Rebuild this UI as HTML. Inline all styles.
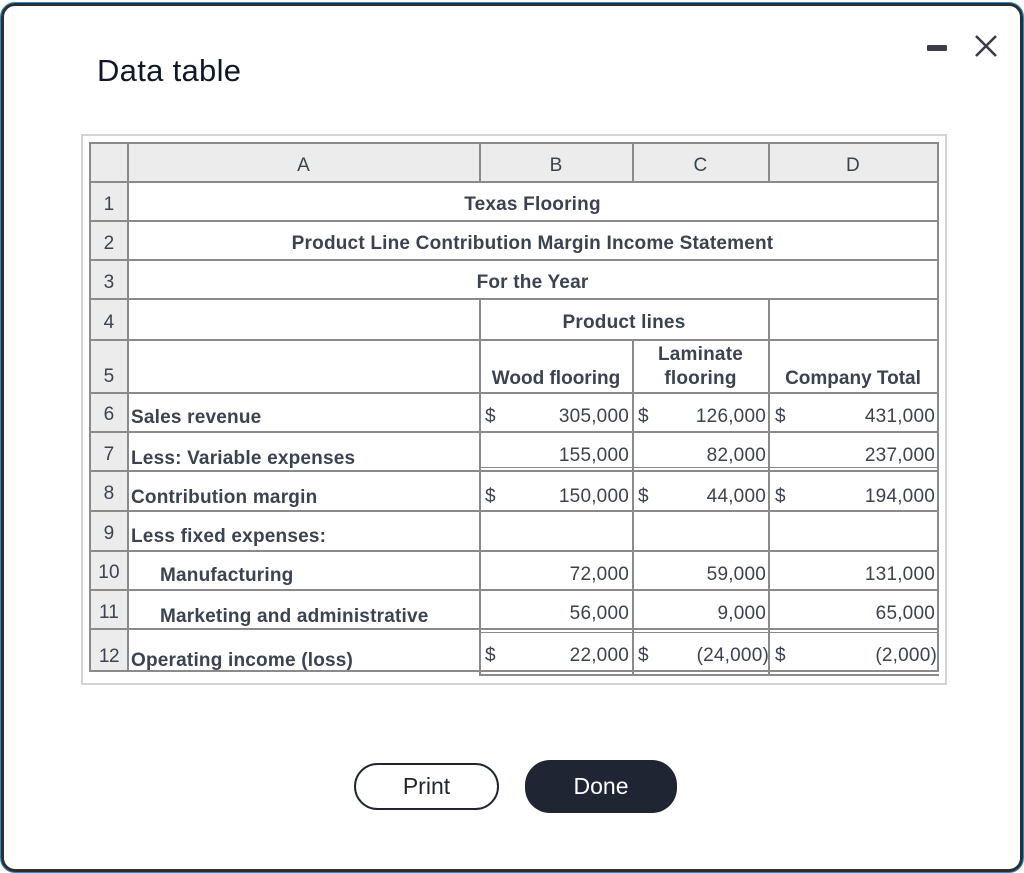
<!DOCTYPE html>
<html><head><meta charset="utf-8"><style>
*{margin:0;padding:0;box-sizing:border-box}
body{width:1024px;height:873px;background:#fff;position:relative;overflow:hidden;font-family:"Liberation Sans",Arial,sans-serif;color:#3b4250}
.frame{position:absolute;left:1px;top:3px;width:1022px;height:869px;border:3px solid #2e2e2e;border-radius:14px;box-shadow:0 0 0 1px #1f8fd6}
.title{position:absolute;left:97px;top:53px;font-size:31px;color:#101828;letter-spacing:0.3px}
.outer{position:absolute;left:81px;top:134px;width:866px;height:551px;border:2px solid #d4d4d4}
.hdr{position:absolute;left:90px;top:143px;width:848px;height:39px;background:#ececec}
.nums{position:absolute;left:90px;top:143px;width:38px;height:529px;background:#ececec}
.h{position:absolute;height:2px;background:#8a8a8a}
.v{position:absolute;width:2px;background:#8a8a8a}
.t{position:absolute;font-size:19px;line-height:20px;white-space:nowrap;letter-spacing:0.2px}
.b{font-weight:bold}
.c{text-align:center}
.r{text-align:right}
.btn{position:absolute;border-radius:25px;font-size:23px;text-align:center}
</style></head><body>
<div class="frame"></div>
<div class="title">Data table</div>
<div style="position:absolute;left:927px;top:45px;width:20px;height:6px;background:#3a3d45;border-radius:1px"></div>
<svg style="position:absolute;left:974px;top:34px" width="24" height="24" viewBox="0 0 24 24"><path d="M2 2L22 22M22 2L2 22" stroke="#3a3d45" stroke-width="2.6"/></svg>

<div class="outer"></div>
<div class="hdr"></div>
<div class="nums"></div>

<div class="h" style="left:90px;top:142px;width:849px"></div>
<div class="h" style="left:90px;top:181px;width:849px"></div>
<div class="h" style="left:90px;top:220px;width:849px"></div>
<div class="h" style="left:90px;top:259px;width:849px"></div>
<div class="h" style="left:90px;top:298px;width:849px"></div>
<div class="h" style="left:90px;top:339px;width:849px"></div>
<div class="h" style="left:90px;top:392px;width:849px"></div>
<div class="h" style="left:90px;top:431px;width:849px"></div>
<div class="h" style="left:90px;top:470px;width:849px"></div>
<div class="h" style="left:479px;top:467px;width:460px;height:1px"></div>
<div class="h" style="left:90px;top:510px;width:849px"></div>
<div class="h" style="left:90px;top:550px;width:849px"></div>
<div class="h" style="left:90px;top:589px;width:849px"></div>
<div class="h" style="left:90px;top:628px;width:849px"></div>
<div class="h" style="left:479px;top:632px;width:460px;height:1px"></div>
<div class="h" style="left:90px;top:670px;width:849px"></div>
<div class="h" style="left:479px;top:674px;width:460px"></div>

<div class="v" style="left:89px;top:142px;height:530px"></div>
<div class="v" style="left:127px;top:142px;height:530px"></div>
<div class="v" style="left:937px;top:142px;height:530px"></div>
<div class="v" style="left:479px;top:142px;height:40px"></div>
<div class="v" style="left:632px;top:142px;height:40px"></div>
<div class="v" style="left:768px;top:142px;height:40px"></div>
<div class="v" style="left:479px;top:298px;height:376px"></div>
<div class="v" style="left:632px;top:339px;height:335px"></div>
<div class="v" style="left:768px;top:298px;height:376px"></div>

<div class="t c" style="left:128px;width:351px;top:156px">A</div>
<div class="t c" style="left:480px;width:152px;top:156px">B</div>
<div class="t c" style="left:633px;width:135px;top:156px">C</div>
<div class="t c" style="left:769px;width:168px;top:156px">D</div>

<div class="t c" style="left:90px;width:38px;top:195px">1</div>
<div class="t c" style="left:90px;width:38px;top:234px">2</div>
<div class="t c" style="left:90px;width:38px;top:273px">3</div>
<div class="t c" style="left:90px;width:38px;top:313px">4</div>
<div class="t c" style="left:90px;width:38px;top:367px">5</div>
<div class="t c" style="left:90px;width:38px;top:405px">6</div>
<div class="t c" style="left:90px;width:38px;top:445px">7</div>
<div class="t c" style="left:90px;width:38px;top:484px">8</div>
<div class="t c" style="left:90px;width:38px;top:524px">9</div>
<div class="t c" style="left:90px;width:38px;top:563px">10</div>
<div class="t c" style="left:90px;width:38px;top:603px">11</div>
<div class="t c" style="left:90px;width:38px;top:647px;letter-spacing:-0.5px">12</div>

<div class="t b c" style="left:128px;width:809px;top:195px">Texas Flooring</div>
<div class="t b c" style="left:128px;width:809px;top:234px">Product Line Contribution Margin Income Statement</div>
<div class="t b c" style="left:128px;width:809px;top:273px">For the Year</div>
<div class="t b c" style="left:480px;width:288px;top:313px">Product lines</div>
<div class="t b c" style="left:480px;width:152px;top:369px;letter-spacing:0">Wood flooring</div>
<div class="t b c" style="left:633px;width:135px;top:345px">Laminate</div>
<div class="t b c" style="left:633px;width:135px;top:369px">flooring</div>
<div class="t b c" style="left:769px;width:168px;top:369px;letter-spacing:0">Company Total</div>

<div class="t b" style="left:131px;top:408px">Sales revenue</div>
<div class="t b" style="left:131px;top:449px">Less: Variable expenses</div>
<div class="t b" style="left:131px;top:488px">Contribution margin</div>
<div class="t b" style="left:131px;top:527px">Less fixed expenses:</div>
<div class="t b" style="left:160px;top:566px">Manufacturing</div>
<div class="t b" style="left:160px;top:607px">Marketing and administrative</div>
<div class="t b" style="left:131px;top:651px">Operating income (loss)</div>

<div class="t" style="left:485px;top:407px">$</div>
<div class="t r" style="left:480px;width:149px;top:407px">305,000</div>
<div class="t" style="left:638px;top:407px">$</div>
<div class="t r" style="left:633px;width:133px;top:407px">126,000</div>
<div class="t" style="left:775px;top:407px">$</div>
<div class="t r" style="left:769px;width:166px;top:407px">431,000</div>

<div class="t r" style="left:480px;width:149px;top:446px">155,000</div>
<div class="t r" style="left:633px;width:133px;top:446px">82,000</div>
<div class="t r" style="left:769px;width:166px;top:446px">237,000</div>

<div class="t" style="left:485px;top:487px">$</div>
<div class="t r" style="left:480px;width:149px;top:487px">150,000</div>
<div class="t" style="left:638px;top:487px">$</div>
<div class="t r" style="left:633px;width:133px;top:487px">44,000</div>
<div class="t" style="left:775px;top:487px">$</div>
<div class="t r" style="left:769px;width:166px;top:487px">194,000</div>

<div class="t r" style="left:480px;width:149px;top:565px">72,000</div>
<div class="t r" style="left:633px;width:133px;top:565px">59,000</div>
<div class="t r" style="left:769px;width:166px;top:565px">131,000</div>

<div class="t r" style="left:480px;width:149px;top:604px">56,000</div>
<div class="t r" style="left:633px;width:133px;top:604px">9,000</div>
<div class="t r" style="left:769px;width:166px;top:604px">65,000</div>

<div class="t" style="left:485px;top:646px">$</div>
<div class="t r" style="left:480px;width:149px;top:646px">22,000</div>
<div class="t" style="left:638px;top:646px">$</div>
<div class="t r" style="left:633px;width:136px;top:646px">(24,000)</div>
<div class="t" style="left:775px;top:646px">$</div>
<div class="t r" style="left:769px;width:168px;top:646px">(2,000)</div>

<div class="btn" style="left:354px;top:763px;width:145px;height:47px;border:2px solid #1f2532;line-height:43px;color:#1f2532">Print</div>
<div class="btn" style="left:525px;top:760px;width:152px;height:53px;background:#1f2532;color:#fff;line-height:53px">Done</div>
</body></html>
